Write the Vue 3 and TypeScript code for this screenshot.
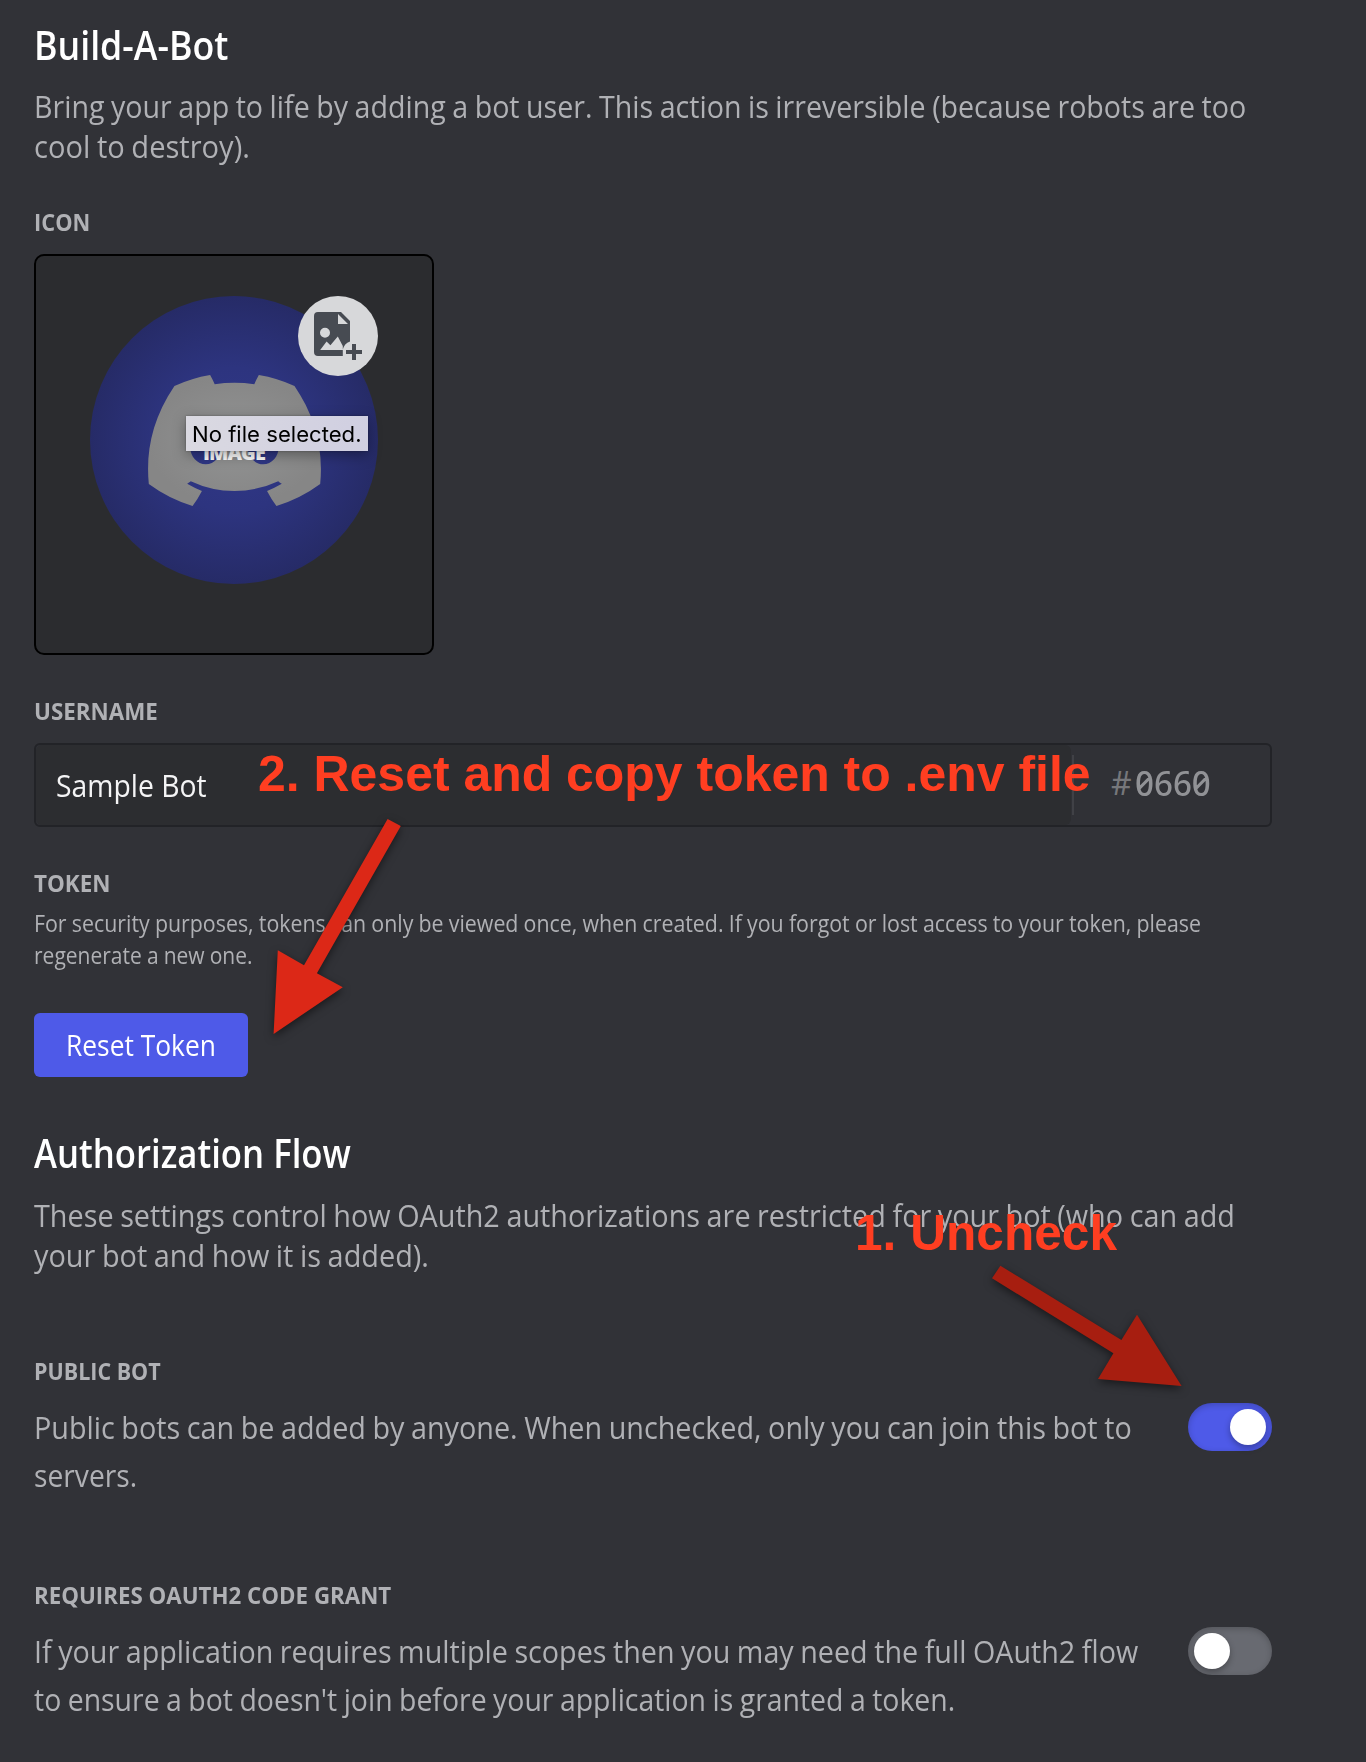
<script setup lang="ts">
import { ref, type Directive } from 'vue'

interface Line {
  text: string
  w: number
}

const vFit: Directive<HTMLElement, number> = {
  mounted(el, binding) {
    el.style.transform = `scaleX(${binding.value / el.offsetWidth})`
  },
}

const intro: Line[] = [
  { text: 'Bring your app to life by adding a bot user. This action is irreversible (because robots are too', w: 1212 },
  { text: 'cool to destroy).', w: 216 },
]
const tokenHelp: Line[] = [
  { text: 'For security purposes, tokens can only be viewed once, when created. If you forgot or lost access to your token, please', w: 1167 },
  { text: 'regenerate a new one.', w: 219 },
]
const authIntro: Line[] = [
  { text: 'These settings control how OAuth2 authorizations are restricted for your bot (who can add', w: 1201 },
  { text: 'your bot and how it is added).', w: 395 },
]

const settings = ref([
  {
    label: { text: 'PUBLIC BOT', w: 127 },
    lines: [
      { text: 'Public bots can be added by anyone. When unchecked, only you can join this bot to', w: 1098 },
      { text: 'servers.', w: 103 },
    ],
    on: true,
  },
  {
    label: { text: 'REQUIRES OAUTH2 CODE GRANT', w: 357 },
    lines: [
      { text: 'If your application requires multiple scopes then you may need the full OAuth2 flow', w: 1104 },
      { text: "to ensure a bot doesn't join before your application is granted a token.", w: 921 },
    ],
    on: false,
  },
])
</script>

<template>
  <main class="page">
    <h1 class="title"><span v-fit="194" class="fit">Build-A-Bot</span></h1>
    <p class="body">
      <span v-for="l in intro" :key="l.text" class="line"><span v-fit="l.w" class="fit">{{ l.text }}</span></span>
    </p>

    <h2 class="label icon-label"><span v-fit="56" class="fit">ICON</span></h2>
    <div class="uploader">
      <div class="avatar">
        <svg class="logo" viewBox="0 0 127.14 96.36">
          <path
            fill="url(#logoShade)"
            d="M107.7,8.07A105.15,105.15,0,0,0,81.47,0a72.06,72.06,0,0,0-3.36,6.83A97.68,97.68,0,0,0,49,6.83,72.37,72.37,0,0,0,45.64,0,105.89,105.89,0,0,0,19.39,8.09C2.79,32.65-1.71,56.6.54,80.21h0A105.73,105.73,0,0,0,32.71,96.36,77.7,77.7,0,0,0,39.6,85.25a68.42,68.42,0,0,1-10.85-5.18c.91-.66,1.8-1.34,2.66-2a75.57,75.57,0,0,0,64.32,0c.87.71,1.76,1.39,2.66,2a68.68,68.68,0,0,1-10.87,5.19,77,77,0,0,0,6.89,11.1A105.25,105.25,0,0,0,126.6,80.22h0C129.24,52.84,122.09,29.11,107.7,8.07ZM42.45,65.69C36.18,65.69,31,60,31,53s5-12.74,11.43-12.74S54,46,53.89,53,48.84,65.69,42.45,65.69Zm42.24,0C78.41,65.69,73.25,60,73.25,53s5-12.74,11.44-12.74S96.23,46,96.12,53,91.08,65.69,84.69,65.69Z"
          />
          <defs>
            <radialGradient id="logoShade">
              <stop offset="0" stop-color="#929393" />
              <stop offset="1" stop-color="#868686" />
            </radialGradient>
          </defs>
        </svg>
        <span class="hint">IMAGE</span>
        <span class="badge">
          <svg viewBox="0 0 24 24" width="48" height="48">
            <path
              fill="#474b52"
              fill-rule="evenodd"
              d="M2 0H13.5L18 4.5V14.7A5.7 5.7 0 0 0 14.4 18.8V22H2A2 2 0 0 1 0 20V2A2 2 0 0 1 2 0ZM12 1V6H17ZM5.5 7.9A2.5 2.5 0 1 0 5.5 12.9A2.5 2.5 0 1 0 5.5 7.9ZM3.1 19H14.4V17L11.9 12.2L8.2 16.6L6.3 14.8Z"
            />
            <path fill="#474b52" d="M19 16h2v3h3v2h-3v3h-2v-3h-3v-2h3z" />
          </svg>
        </span>
        <span class="tooltip"><span v-fit="170" class="fit">No file selected.</span></span>
      </div>
    </div>

    <h2 class="label name-label"><span v-fit="123.5" class="fit">USERNAME</span></h2>
    <div class="field">
      <div class="field-name"><span v-fit="151" class="fit">Sample Bot</span></div>
      <div class="field-tag"><span class="hash">#</span><span v-fit="76" class="fit digits">0660</span></div>
    </div>

    <h2 class="label token-label"><span v-fit="76" class="fit">TOKEN</span></h2>
    <p class="small">
      <span v-for="l in tokenHelp" :key="l.text" class="line"><span v-fit="l.w" class="fit">{{ l.text }}</span></span>
    </p>
    <button class="reset" type="button"><span v-fit="150" class="fit">Reset Token</span></button>

    <h1 class="title auth-title"><span v-fit="317" class="fit">Authorization Flow</span></h1>
    <p class="body">
      <span v-for="l in authIntro" :key="l.text" class="line"><span v-fit="l.w" class="fit">{{ l.text }}</span></span>
    </p>

    <section v-for="s in settings" :key="s.label.text" class="setting">
      <h2 class="label"><span v-fit="s.label.w" class="fit">{{ s.label.text }}</span></h2>
      <div class="setting-row">
        <p class="body loose">
          <span v-for="l in s.lines" :key="l.text" class="line"><span v-fit="l.w" class="fit">{{ l.text }}</span></span>
        </p>
        <div class="switch" :class="{ on: s.on }" role="switch" :aria-checked="s.on" @click="s.on = !s.on">
          <span class="knob"></span>
        </div>
      </div>
    </section>

    <svg class="arrows" viewBox="0 0 1366 1762">
      <polygon fill="#dc2817" points="387.6,819 400.8,826 316.9,973.3 342.8,987.3 273.6,1034 277.8,950.3 304,965.3" />
      <polygon fill="#a71e10" points="1000.4,1265.7 1121.4,1340 1137,1314.7 1181.6,1386 1098,1379 1113.4,1353.3 992,1278.3" />
    </svg>
    <div class="note note-reset"><span v-fit="833" class="fit">2. Reset and copy token to .env file</span></div>
    <div class="note note-uncheck"><span v-fit="262" class="fit">1. Uncheck</span></div>
  </main>
</template>

<style>
body {
  margin: 0;
  background: #313237;
}
</style>

<style scoped>
.page {
  position: relative;
  box-sizing: border-box;
  width: 1366px;
  height: 1762px;
  padding: 20px 94px 0 34px;
  overflow: hidden;
  background: #313237;
  color: #b0b1b5;
  font-family: 'Open Sans', 'Noto Sans', sans-serif;
}
h1,
h2,
p {
  margin: 0;
}
.fit {
  display: inline-block;
  white-space: nowrap;
  transform-origin: left;
}
.line {
  display: block;
}
.title {
  height: 50px;
  margin-bottom: 16px;
  font-size: 39px;
  font-weight: 600;
  line-height: 50px;
  color: #fff;
}
.body {
  font-size: 31.5px;
  line-height: 40px;
  word-spacing: -1px;
}
.body.loose {
  line-height: 48px;
}
.body .line {
  height: 40px;
}
.body.loose .line {
  height: 48px;
}
.label {
  height: 24px;
  font-size: 23px;
  font-weight: 700;
  line-height: 24px;
}
.icon-label {
  margin: 44px 0 20px;
}
.uploader {
  box-sizing: border-box;
  width: 400px;
  height: 401px;
  padding: 40px 54px;
  border: 2px solid #000;
  border-radius: 10px;
  background: #2b2c2f;
}
.avatar {
  position: relative;
  display: flex;
  align-items: center;
  justify-content: center;
  width: 288px;
  height: 288px;
  border-radius: 50%;
  background: radial-gradient(circle closest-side, #303889 0, #2d347f 50%, #262b67 100%);
}
.logo {
  width: 173px;
  height: 131px;
}
.hint {
  position: absolute;
  left: 113px;
  top: 145px;
  font-size: 20px;
  font-weight: 800;
  line-height: 24px;
  letter-spacing: -0.9px;
  color: #fff;
}
.badge {
  position: absolute;
  top: 0;
  right: 0;
  display: grid;
  place-items: center;
  width: 80px;
  height: 80px;
  border-radius: 50%;
  background: #d7d8da;
}
.tooltip {
  position: absolute;
  left: 96px;
  top: 120px;
  box-sizing: border-box;
  width: 182px;
  height: 35px;
  padding-left: 6px;
  background: linear-gradient(90deg, #dad9e1, #d0cfe1);
  box-shadow: 0 4px 14px rgba(0, 0, 0, 0.35), 0 0 2px rgba(0, 0, 0, 0.3);
  font-family: Inter, sans-serif;
  font-size: 22px;
  line-height: 36px;
  color: #000;
}
.name-label {
  margin: 44px 0 20px;
}
.field {
  display: flex;
  box-sizing: border-box;
  width: 1238px;
  height: 84px;
  border: 2px solid #222327;
  border-radius: 6px;
  background: #303136;
  line-height: 80px;
}
.field-name {
  flex: none;
  width: 1035px;
  box-sizing: border-box;
  padding-left: 20px;
  border-radius: 6px;
  background: #2c2d30;
  font-size: 31.5px;
  line-height: 80px;
  color: #f4f4f5;
}
.field-tag {
  display: flex;
  align-items: center;
  height: 60px;
  margin: 10px 0 0 1px;
  padding-left: 37px;
  border-left: 2px solid #404146;
  font-family: 'Noto Sans', sans-serif;
  font-size: 34px;
  line-height: 56px;
  color: #919296;
}
.hash,
.digits {
  height: 60px;
}
.hash {
  width: 24px;
  font-size: 32px;
  color: #76777b;
}
.digits {
  font-feature-settings: 'zero';
  font-weight: 500;
}
.token-label {
  margin: 44px 0 12px;
}
.small {
  font-size: 23.5px;
  line-height: 32px;
  word-spacing: -0.4px;
}
.small .line {
  height: 32px;
}
.reset {
  display: block;
  width: 214px;
  height: 64px;
  margin: 42px 0 51px;
  padding: 0 0 0 32px;
  border: 0;
  border-radius: 6px;
  background: #4e5ae8;
  color: #fff;
  font-family: inherit;
  font-size: 29px;
  font-weight: 400;
  line-height: 64px;
  text-align: left;
}
.auth-title {
  margin-bottom: 17px;
}
.setting {
  margin-top: 84px;
}
.setting-row {
  display: flex;
  justify-content: space-between;
  width: 1238px;
  margin-top: 20px;
}
.loose {
  width: 1120px;
}
.switch {
  flex: none;
  box-sizing: border-box;
  width: 84px;
  height: 48px;
  padding: 6px;
  border-radius: 24px;
  background: #686a71;
  box-shadow: inset 0 2px 6px rgba(0, 0, 0, 0.2);
}
.switch.on {
  padding-left: 42px;
  background: #4e5ae8;
}
.knob {
  display: block;
  width: 36px;
  height: 36px;
  border-radius: 50%;
  background: #fff;
  box-shadow: 0 3px 6px rgba(0, 0, 0, 0.3);
}
.arrows {
  position: absolute;
  inset: 0;
  width: 1366px;
  height: 1762px;
  pointer-events: none;
  filter: drop-shadow(0 3px 4px rgba(0, 0, 0, 0.5));
}
.note {
  position: absolute;
  color: #ff3e21;
  font-family: 'Liberation Sans', Arial, sans-serif;
  font-size: 50px;
  font-weight: 700;
  line-height: 56px;
}
.note-reset {
  left: 258px;
  top: 746px;
}
.note-uncheck {
  left: 855px;
  top: 1205px;
}
</style>
